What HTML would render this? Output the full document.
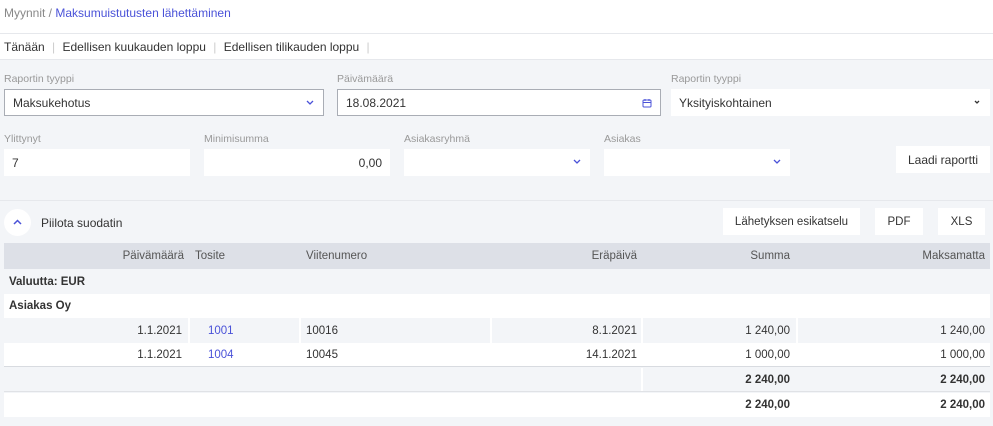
<!DOCTYPE html>
<html><head><meta charset="utf-8"><style>
*{box-sizing:border-box;margin:0;padding:0}
body{width:993px;height:426px;background:#f3f5f8;font-family:"Liberation Sans",sans-serif;font-size:11.5px;color:#333;position:relative;overflow:hidden}
.a{position:absolute}
.top{left:0;top:0;width:993px;height:60px;background:#fff}
.lbl{color:#999;font-size:10.5px}
.box{background:#fff;height:27px;display:flex;align-items:center;padding:0 8px;font-size:12px;color:#333}
.bd{border:1px solid #a9adb5}
.btn{background:#fff;display:flex;align-items:center;justify-content:center;font-size:11.5px;color:#333}
.chev{position:absolute;right:8px;top:9px}
.tr{position:absolute;left:4px;width:986px;height:25px}
.c{position:absolute;top:0;height:100%;display:flex;align-items:center;font-size:11.5px}
.r{justify-content:flex-end}
.b{font-weight:bold}
.sep{position:absolute;top:0;width:2px;height:100%;background:#fff}
</style></head><body>
<div class="a top"></div>
<div class="a" style="left:0;top:33px;width:993px;height:1px;background:#e6e8ec"></div>
<div class="a" style="left:0;top:59px;width:993px;height:1px;background:#e6e8ec"></div>
<div class="a" style="left:4px;top:6px;font-size:12px;color:#888">Myynnit / <span style="color:#4a52d8">Maksumuistutusten lähettäminen</span></div>
<div class="a" style="left:4px;top:40px;font-size:12px;color:#333">Tänään <span style="color:#ccc;margin:0 4px">|</span> Edellisen kuukauden loppu <span style="color:#ccc;margin:0 4px">|</span> Edellisen tilikauden loppu <span style="color:#ccc;margin:0 4px">|</span></div>

<div class="a lbl" style="left:4px;top:73px">Raportin tyyppi</div>
<div class="a lbl" style="left:337px;top:73px">Päivämäärä</div>
<div class="a lbl" style="left:671px;top:73px">Raportin tyyppi</div>
<div class="a box bd" style="left:4px;top:89px;width:320px">Maksukehotus<svg class="chev" width="10" height="8" viewBox="0 0 10 8"><path d="M2 2l3 3 3-3" stroke="#4a52d8" stroke-width="1.3" fill="none"/></svg></div>
<div class="a box bd" style="left:337px;top:89px;width:324px">18.08.2021<svg class="chev" style="top:8px" width="10" height="10" viewBox="0 0 10 10"><rect x="1" y="2" width="8" height="7" rx="1" stroke="#4a52d8" fill="none"/><path d="M1 4.5h8M3 1v2M7 1v2" stroke="#4a52d8"/></svg></div>
<div class="a box" style="left:671px;top:89px;width:319px">Yksityiskohtainen<svg class="chev" width="10" height="8" viewBox="0 0 10 8"><path d="M3 3l2 2 2-2" stroke="#333" stroke-width="1.3" fill="none"/></svg></div>

<div class="a lbl" style="left:4px;top:133px">Ylittynyt</div>
<div class="a lbl" style="left:204px;top:133px">Minimisumma</div>
<div class="a lbl" style="left:404px;top:133px">Asiakasryhmä</div>
<div class="a lbl" style="left:604px;top:133px">Asiakas</div>
<div class="a box" style="left:4px;top:149px;width:186px">7</div>
<div class="a box" style="left:204px;top:149px;width:186px;justify-content:flex-end">0,00</div>
<div class="a box" style="left:404px;top:149px;width:186px"><svg class="chev" width="10" height="8" viewBox="0 0 10 8"><path d="M2 2l3 3 3-3" stroke="#4a52d8" stroke-width="1.3" fill="none"/></svg></div>
<div class="a box" style="left:604px;top:149px;width:186px"><svg class="chev" width="10" height="8" viewBox="0 0 10 8"><path d="M2 2l3 3 3-3" stroke="#4a52d8" stroke-width="1.3" fill="none"/></svg></div>
<div class="a btn" style="left:896px;top:146px;width:94px;height:27px;font-size:12px">Laadi raportti</div>

<div class="a" style="left:0;top:200px;width:993px;height:1px;background:#e6e8ec"></div>
<div class="a" style="left:4px;top:209px;width:27px;height:27px;border-radius:50%;background:#fff"><svg class="a" style="left:8px;top:9px" width="11" height="8" viewBox="0 0 11 8"><path d="M2 6l3.5-3.5L9 6" stroke="#4a52d8" stroke-width="1.5" fill="none"/></svg></div>
<div class="a" style="left:41px;top:216px;font-size:12px">Piilota suodatin</div>
<div class="a btn" style="left:723px;top:208px;width:137px;height:27px">Lähetyksen esikatselu</div>
<div class="a btn" style="left:875px;top:208px;width:48px;height:27px">PDF</div>
<div class="a btn" style="left:938px;top:208px;width:47px;height:27px">XLS</div>

<div class="tr" style="top:243px;height:26px;background:#dde0e7;color:#555">
<div class="c r" style="left:0;width:180px">Päivämäärä</div>
<div class="c" style="left:191px">Tosite</div>
<div class="c" style="left:302px">Viitenumero</div>
<div class="c r" style="left:0;width:633px">Eräpäivä</div>
<div class="c r" style="left:0;width:786px">Summa</div>
<div class="c r" style="left:0;width:981px">Maksamatta</div>
</div>
<div class="tr" style="top:269px;background:#f3f5f8"><div class="c b" style="left:5px">Valuutta: EUR</div></div>
<div class="tr" style="top:294px;height:24px;background:#fff"><div class="c b" style="left:5px">Asiakas Oy</div></div>
<div class="tr" style="top:318px;background:#f3f5f8">
<div class="sep" style="left:184px"></div><div class="sep" style="left:295px"></div><div class="sep" style="left:486px"></div><div class="sep" style="left:637px"></div><div class="sep" style="left:792px"></div>
<div class="c r" style="left:0;width:178px">1.1.2021</div><div class="c" style="left:204px;color:#4a52d8">1001</div><div class="c" style="left:302px">10016</div>
<div class="c r" style="left:0;width:633px">8.1.2021</div><div class="c r" style="left:0;width:786px">1 240,00</div><div class="c r" style="left:0;width:981px">1 240,00</div>
</div>
<div class="tr" style="top:343px;height:24px;background:#fff;border-bottom:1px solid #d8dbe0">
<div class="c r" style="left:0;width:178px">1.1.2021</div><div class="c" style="left:204px;color:#4a52d8">1004</div><div class="c" style="left:302px">10045</div>
<div class="c r" style="left:0;width:633px">14.1.2021</div><div class="c r" style="left:0;width:786px">1 000,00</div><div class="c r" style="left:0;width:981px">1 000,00</div>
</div>
<div class="tr" style="top:368px;height:24px;background:#f3f5f8;border-bottom:1px solid #e0e2e6">
<div class="sep" style="left:637px"></div>
<div class="c r b" style="left:0;width:786px">2 240,00</div><div class="c r b" style="left:0;width:981px">2 240,00</div>
</div>
<div class="tr" style="top:393px;height:24px;background:#fff">
<div class="c r b" style="left:0;width:786px">2 240,00</div><div class="c r b" style="left:0;width:981px">2 240,00</div>
</div>
</body></html>
